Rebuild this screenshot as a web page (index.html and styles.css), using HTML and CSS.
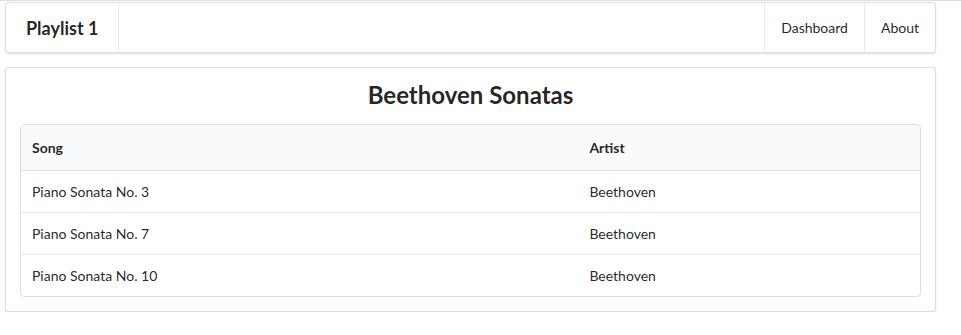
FILE: index.html
```html
<!DOCTYPE html>
<html lang="en">
<head>
    <meta charset="UTF-8">
    <meta name="viewport" content="width=device-width, initial-scale=1.0">
    <title>Playlist 1</title>
    <link rel="stylesheet" href="styles.css">
</head>
<body>
    <div class="page">
        <!-- Top menu -->
        <div class="menu">
            <a class="item header-item">Playlist 1</a>
            <div class="right-menu">
                <a class="item">Dashboard</a>
                <a class="item">About</a>
            </div>
        </div>

        <!-- Playlist -->
        <div class="segment">
            <h2 class="title">Beethoven Sonatas</h2>
            <table class="songs">
                <thead>
                    <tr>
                        <th class="col-song">Song</th>
                        <th>Artist</th>
                    </tr>
                </thead>
                <tbody>
                    <tr>
                        <td>Piano Sonata No. 3</td>
                        <td>Beethoven</td>
                    </tr>
                    <tr>
                        <td>Piano Sonata No. 7</td>
                        <td>Beethoven</td>
                    </tr>
                    <tr>
                        <td>Piano Sonata No. 10</td>
                        <td>Beethoven</td>
                    </tr>
                </tbody>
            </table>
        </div>
    </div>
</body>
</html>
```

FILE: styles.css
```css
body {
    margin: 0;
    font-family: Lato, "Helvetica Neue", Arial, sans-serif;
    font-size: 14px;
    color: rgba(0,0,0,0.87);
    background: #fff;
    border-top: 1px solid #dedede;
}
.page {
    margin: 1px 25px 0 5px;
}
.menu {
    display: flex;
    border: 1px solid rgba(34,36,38,0.15);
    border-radius: 4px;
    box-shadow: 0 1px 2px 0 rgba(34,36,38,0.15);
    background: #fff;
}
.item {
    display: flex;
    align-items: center;
    padding: 0 16px;
    line-height: 1;
    color: rgba(0,0,0,0.87);
    cursor: pointer;
}
.header-item {
    font-size: 18px;
    font-weight: bold;
    padding: 15.5px 20px;
    border-right: 1px solid rgba(34,36,38,0.1);
}
.right-menu {
    display: flex;
    margin-left: auto;
}
.right-menu .item {
    border-left: 1px solid rgba(34,36,38,0.1);
}
.segment {
    margin-top: 14px;
    padding: 14px;
    border: 1px solid rgba(34,36,38,0.15);
    border-radius: 4px;
    box-shadow: 0 1px 2px 0 rgba(34,36,38,0.15);
    background: #fff;
}
.title {
    margin: -3px 0 14px;
    font-size: 24px;
    line-height: 31px;
    text-align: center;
    font-weight: bold;
}
.songs {
    width: 100%;
    border: 1px solid rgba(34,36,38,0.15);
    border-radius: 4px;
    border-collapse: separate;
    border-spacing: 0;
    text-align: left;
}
.songs th {
    background: #f9fafb;
    padding: 13px 11px 12px;
    line-height: 20px;
    font-weight: bold;
    border-bottom: 1px solid rgba(34,36,38,0.1);
}
.songs th:first-child {
    border-top-left-radius: 4px;
}
.songs th:last-child {
    border-top-right-radius: 4px;
}
.col-song {
    width: 62%;
}
.songs td {
    padding: 11px 11px 10px;
    line-height: 20px;
    border-top: 1px solid rgba(34,36,38,0.1);
}
.songs tbody tr:first-child td {
    border-top: none;
}
```
